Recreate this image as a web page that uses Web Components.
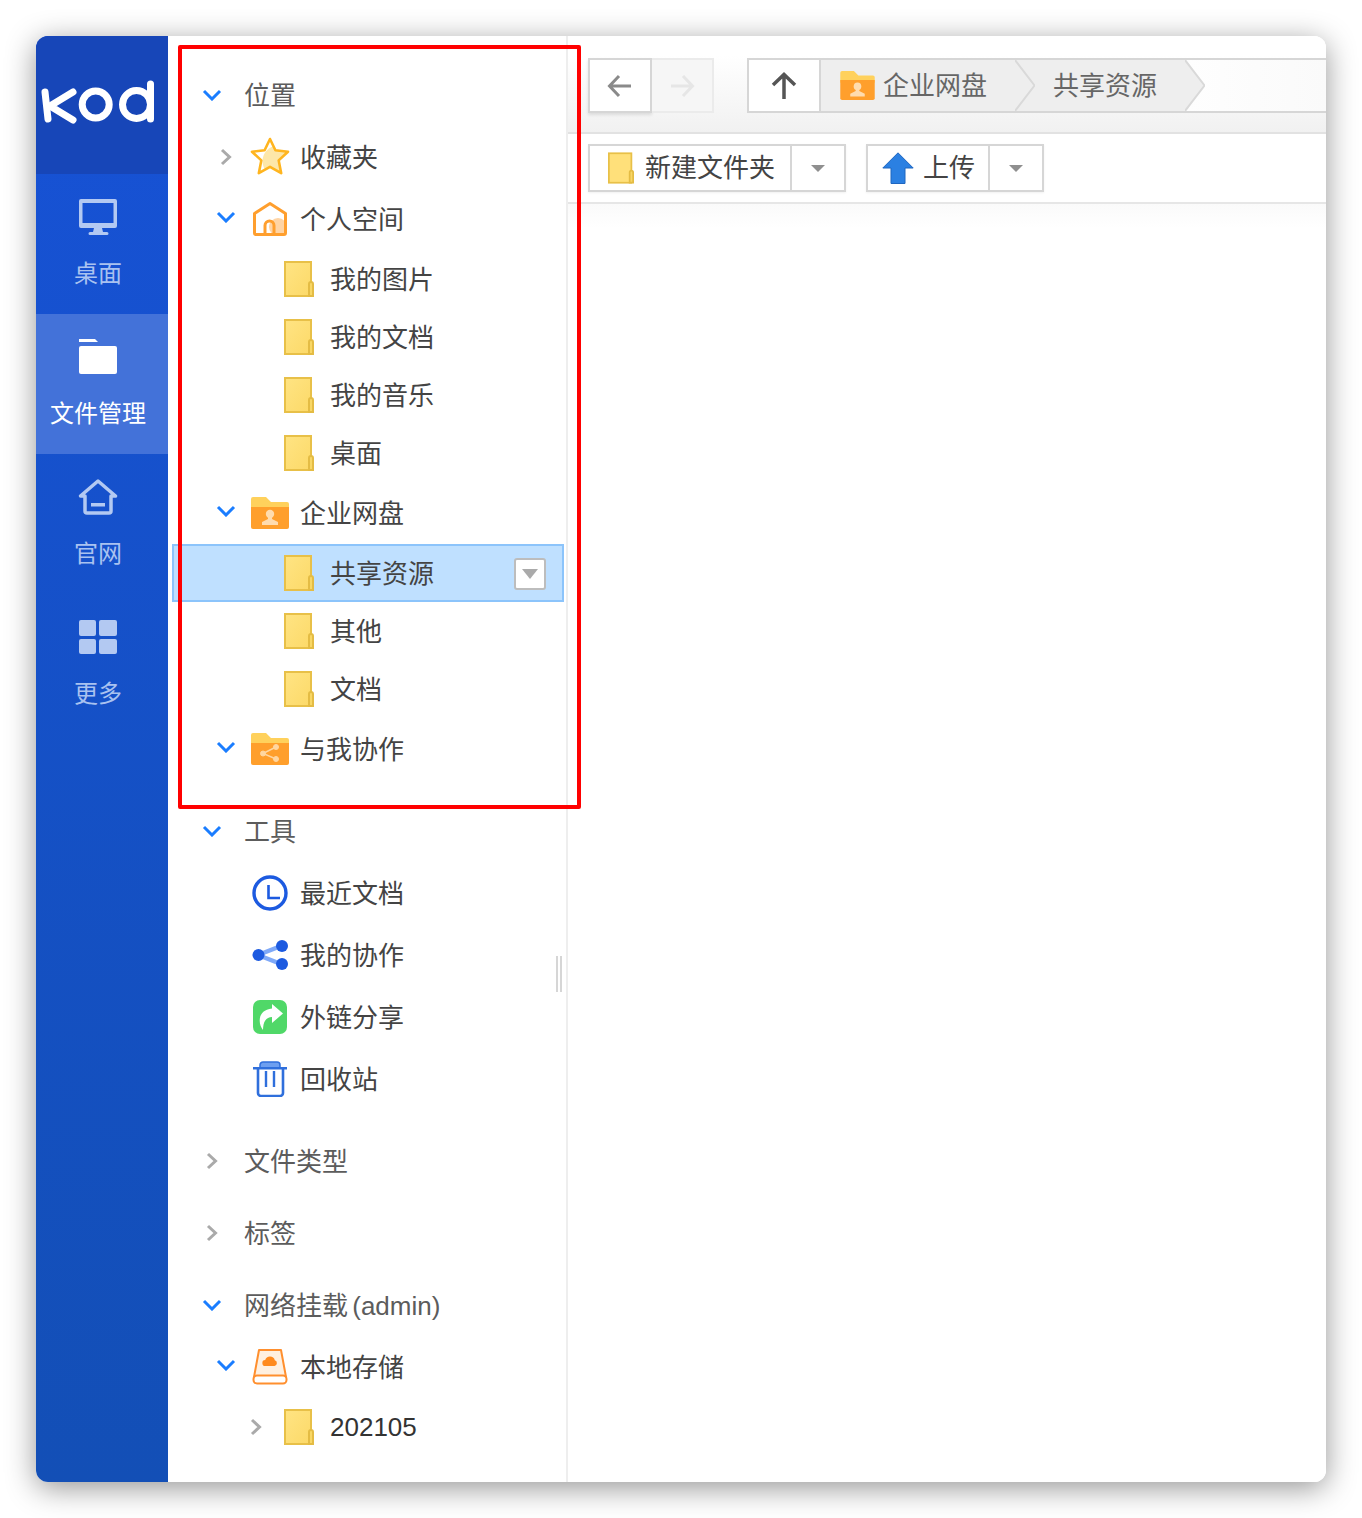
<!DOCTYPE html>
<html lang="zh">
<head>
<meta charset="utf-8">
<title>kod</title>
<style>
html, body { margin: 0; background: #fff; }
body {
	box-sizing: border-box;
	width: 1362px;
	height: 1518px;
	padding: 36px;
	font-family: "Liberation Sans", "Noto Sans CJK SC", sans-serif;
}
</style>
</head>
<body>
<app-window>
	<nav-rail slot="rail">
		<rail-item icon="monitor">桌面</rail-item>
		<rail-item icon="folder-white" active>文件管理</rail-item>
		<rail-item icon="home">官网</rail-item>
		<rail-item icon="grid">更多</rail-item>
	</nav-rail>

	<file-tree slot="tree">
		<tree-row level="0" arrow="down">位置</tree-row>
		<tree-row level="1" arrow="right" icon="star">收藏夹</tree-row>
		<tree-row level="1" arrow="down" icon="house">个人空间</tree-row>
		<tree-row level="2" icon="folder">我的图片</tree-row>
		<tree-row level="2" icon="folder">我的文档</tree-row>
		<tree-row level="2" icon="folder">我的音乐</tree-row>
		<tree-row level="2" icon="folder">桌面</tree-row>
		<tree-row level="1" arrow="down" icon="group">企业网盘</tree-row>
		<tree-row level="2" icon="folder" selected>共享资源</tree-row>
		<tree-row level="2" icon="folder">其他</tree-row>
		<tree-row level="2" icon="folder">文档</tree-row>
		<tree-row level="1" arrow="down" icon="shared" gap="20">与我协作</tree-row>

		<tree-row level="0" arrow="down">工具</tree-row>
		<tree-row level="1" icon="clock">最近文档</tree-row>
		<tree-row level="1" icon="share">我的协作</tree-row>
		<tree-row level="1" icon="link">外链分享</tree-row>
		<tree-row level="1" icon="trash" gap="20">回收站</tree-row>

		<tree-row level="0" arrow="right" gap="10">文件类型</tree-row>
		<tree-row level="0" arrow="right" gap="10">标签</tree-row>
		<tree-row level="0" arrow="down">网络挂载 (admin)</tree-row>
		<tree-row level="1" arrow="down" icon="disk">本地存储</tree-row>
		<tree-row level="2" arrow="right" icon="folder" num>202105</tree-row>
	</file-tree>

	<main-pane slot="main">
		<path-bar>
			<path-crumb icon="group-small">企业网盘</path-crumb>
			<path-crumb last>共享资源</path-crumb>
		</path-bar>
		<action-bar>
			<split-button icon="folder-small" main-width="202">新建文件夹</split-button>
			<split-button icon="upload" main-width="122">上传</split-button>
		</action-bar>
	</main-pane>

	<red-mark slot="mark"></red-mark>
</app-window>

<script>
const ICONS = {
	monitor: `<svg width="40" height="36" viewBox="0 0 40 36"><path fill="#b3c9f2" fill-rule="evenodd" d="M3 0h34a2 2 0 0 1 2 2v25a2 2 0 0 1-2 2H3a2 2 0 0 1-2-2V2a2 2 0 0 1 2-2zm1.500 4v20h31V4z"/><path fill="#b3c9f2" d="M16 29h8l1 4h4a1.500 1.500 0 0 1 0 3H12a1.500 1.500 0 0 1 0-3h3z"/></svg>`,
	'folder-white': `<svg width="40" height="36" viewBox="0 0 40 36"><path fill="#fff" d="M1 0h16l3 3H1z"/><path fill="#fff" d="M3 7h34a2 2 0 0 1 2 2v24a2 2 0 0 1-2 2H3a2 2 0 0 1-2-2V9a2 2 0 0 1 2-2z"/></svg>`,
	home: `<svg width="40" height="36" viewBox="0 0 40 36"><path fill="none" stroke="#b3c9f2" stroke-width="3.500" stroke-linejoin="round" d="M2.500 17 20 2l17.500 15H33v15a2 2 0 0 1-2 2H9a2 2 0 0 1-2-2V17z"/><rect x="13" y="24" width="14" height="3.500" fill="#b3c9f2"/></svg>`,
	grid: `<svg width="40" height="36" viewBox="0 0 40 36"><g fill="#b3c9f2"><rect x="1" y="1" width="17" height="16" rx="2"/><rect x="21" y="1" width="18" height="16" rx="2"/><rect x="1" y="20" width="17" height="15" rx="2"/><rect x="21" y="20" width="18" height="15" rx="2"/></g></svg>`,

	star: `<svg width="40" height="40" viewBox="0 0 40 40"><clipPath id="s"><path d="M20 2l5.400 11.200 12.600 1.500-9.300 8.700 2.500 12.800L20 29.900 8.800 36.200l2.500-12.800L2 14.700l12.600-1.500z"/></clipPath><path fill="#fff" d="M20 2l5.400 11.200 12.600 1.500-9.300 8.700 2.500 12.800L20 29.900 8.800 36.200l2.500-12.800L2 14.700l12.600-1.500z"/><ellipse cx="27" cy="24" rx="14.500" ry="15" fill="#fde7a9" clip-path="url(#s)"/><path fill="none" stroke="#ffb51f" stroke-width="2.600" stroke-linejoin="round" d="M20 2l5.400 11.200 12.600 1.500-9.300 8.700 2.500 12.800L20 29.900 8.800 36.200l2.500-12.800L2 14.700l12.600-1.500z"/></svg>`,
	house: `<svg width="36" height="36" viewBox="0 0 36 36"><circle cx="26" cy="26" r="9" fill="#ffd4a4"/><path fill="none" stroke="#ff9f2e" stroke-width="3" stroke-linejoin="round" d="M2.500 12.500 18 2.500l15.500 10V32a1.500 1.500 0 0 1-1.500 1.500H4A1.500 1.500 0 0 1 2.500 32z"/><path fill="none" stroke="#ff9f2e" stroke-width="3" d="M13 33.500v-9a4.500 4.500 0 0 1 9 0v9"/></svg>`,
	group: `<svg width="38" height="32" viewBox="0 0 38 32"><path fill="#ffd15c" d="M2 0h13l5 5h16a2 2 0 0 1 2 2v6H0V2a2 2 0 0 1 2-2z"/><path fill="#ff9f2c" d="M0 10h38v20a2 2 0 0 1-2 2H2a2 2 0 0 1-2-2z"/><g fill="#ffdcae"><circle cx="19" cy="17" r="4.200"/><path d="M17 20h4v2l6 3v3H11v-3l6-3z"/></g></svg>`,
	'group-small': `<svg width="35" height="29" viewBox="0 0 38 32"><path fill="#ffd15c" d="M2 0h13l5 5h16a2 2 0 0 1 2 2v6H0V2a2 2 0 0 1 2-2z"/><path fill="#ff9f2c" d="M0 10h38v20a2 2 0 0 1-2 2H2a2 2 0 0 1-2-2z"/><g fill="#ffdcae"><circle cx="19" cy="17" r="4.200"/><path d="M17 20h4v2l6 3v3H11v-3l6-3z"/></g></svg>`,
	shared: `<svg width="38" height="32" viewBox="0 0 38 32"><path fill="#ffd15c" d="M2 0h13l5 5h16a2 2 0 0 1 2 2v6H0V2a2 2 0 0 1 2-2z"/><path fill="#ff9f2c" d="M0 10h38v20a2 2 0 0 1-2 2H2a2 2 0 0 1-2-2z"/><g fill="#ffd6a0" stroke="#ffd6a0"><path fill="none" stroke-width="1.500" d="M25 14l-13 6.500L25 26"/><circle cx="12" cy="20.500" r="2.500"/><circle cx="25" cy="14" r="2.500"/><circle cx="25" cy="26" r="2.500"/></g></svg>`,
	folder: `<svg width="30" height="36" viewBox="0 0 30 36"><defs><linearGradient id="y" x1="0" y1="0" x2="1" y2="1"><stop offset="0" stop-color="#ffe483"/><stop offset="1" stop-color="#fcd968"/></linearGradient></defs><rect x="1" y="1" width="26" height="34" fill="url(#y)" stroke="#e8c048" stroke-width="2"/><path fill="#f8d766" stroke="#e4bc44" stroke-width="2" d="M25 35V23a2 2 0 0 1 4 0v12z"/></svg>`,
	'folder-small': `<svg width="26" height="32" viewBox="0 0 30 36"><rect x="1" y="1" width="26" height="34" fill="#ffe07a" stroke="#e8c048" stroke-width="2"/><path fill="#f8d766" stroke="#e4bc44" stroke-width="2" d="M25 35V23a2 2 0 0 1 4 0v12z"/></svg>`,
	clock: `<svg width="36" height="36" viewBox="0 0 36 36"><circle cx="18" cy="18" r="16" fill="#fff" stroke="#1c5ae0" stroke-width="3.400"/><path fill="none" stroke="#1c5ae0" stroke-width="2.600" d="M16.500 10v13H28"/></svg>`,
	share: `<svg width="36" height="36" viewBox="0 0 36 36"><path fill="none" stroke="#7fa9f8" stroke-width="4.500" d="M29 9 6 18l23 9"/><g fill="#1c5ae0"><circle cx="6.500" cy="18" r="6"/><circle cx="30" cy="9" r="6"/><circle cx="30" cy="27" r="6"/></g></svg>`,
	link: `<svg width="36" height="36" viewBox="0 0 36 36"><rect x="1" y="1" width="34" height="34" rx="7" fill="#50d868"/><path fill="#fff" d="M20 5l11 9.500L20 24v-6c-6 0-9 5-9 13-5-6-6-20 9-21.500z"/></svg>`,
	trash: `<svg width="36" height="36" viewBox="0 0 36 36"><path fill="#6d9ff0" stroke="#2f6fdc" stroke-width="1.500" d="M8 7V4a3 3 0 0 1 3-3h14a3 3 0 0 1 3 3v3z"/><path fill="none" stroke="#2f6fdc" stroke-width="2.400" d="M1 7.200h34"/><path fill="none" stroke="#2f6fdc" stroke-width="2.600" stroke-linejoin="round" d="M6 7.500V32a3 3 0 0 0 3 3h19a3 3 0 0 0 3-3V7.500"/><path fill="none" stroke="#2f6fdc" stroke-width="2.400" d="M14 10v16M22 10v16"/></svg>`,
	disk: `<svg width="36" height="36" viewBox="0 0 36 36"><path fill="#fff0e0" stroke="#ff8f2e" stroke-width="2" stroke-linejoin="round" d="M7 1h22l5 27H2z"/><rect x="1.500" y="26.500" width="33" height="8" rx="3.500" fill="#fff" stroke="#ff8f2e" stroke-width="2"/><path fill="#ff8a1e" d="M13.500 17a3 3 0 0 1-.3-6 5 5 0 0 1 9.600.2 3 3 0 0 1-.3 5.800z"/></svg>`,
	upload: `<svg width="32" height="32" viewBox="0 0 32 32"><path fill="#2b80e2" stroke="#1f66c0" stroke-width="1" stroke-linejoin="round" d="M16 .8 31.200 16H23v15.500H9V16H.8z"/></svg>`,
};

class KodIcon extends HTMLElement {
	static get observedAttributes() { return ['name']; }
	constructor() {
		super();
		this.attachShadow({ mode: 'open' });
	}
	attributeChangedCallback() {
		this.shadowRoot.innerHTML = `<style>:host{display:flex;flex:none}svg{display:block}</style>${ICONS[this.getAttribute('name')] || ''}`;
	}
}
customElements.define('kod-icon', KodIcon);

const windowTemplate = document.createElement('template');
windowTemplate.innerHTML = `
<style>
:host {
	display: block;
	position: relative;
	width: 1290px;
	height: 1446px;
}
.frame {
	display: flex;
	width: 100%;
	height: 100%;
	border-radius: 12px;
	overflow: hidden;
	background: #fff;
	box-shadow: 0 6px 30px rgba(0, 0, 0, .42);
}
</style>
<div class="frame">
	<slot name="rail"></slot>
	<slot name="tree"></slot>
	<slot name="main"></slot>
</div>
<slot name="mark"></slot>
`;
class AppWindow extends HTMLElement {
	constructor() {
		super();
		this.attachShadow({ mode: 'open' });
		this.shadowRoot.appendChild(windowTemplate.content.cloneNode(true));
	}
}
customElements.define('app-window', AppWindow);

const railTemplate = document.createElement('template');
railTemplate.innerHTML = `
<style>
:host {
	display: block;
	flex: none;
	width: 132px;
	height: 100%;
	background: linear-gradient(#1752d6, #134fb6);
}
.logo {
	height: 138px;
	background: #1746b8;
}
svg { display: block; }
</style>
<div class="logo">
	<svg width="132" height="138" viewBox="36 36 132 138" fill="none" stroke="#fff" stroke-width="7" stroke-linecap="round" stroke-linejoin="round">
		<path d="M45 92l3 27"/>
		<path d="M73 92 50 106l23 14"/>
		<circle cx="95.700" cy="104.500" r="13.500"/>
		<circle cx="136.500" cy="104.500" r="14"/>
		<path d="M150.500 84v35"/>
	</svg>
</div>
<slot></slot>
`;
class NavRail extends HTMLElement {
	constructor() {
		super();
		this.attachShadow({ mode: 'open' });
		this.shadowRoot.appendChild(railTemplate.content.cloneNode(true));
	}
}
customElements.define('nav-rail', NavRail);

const railItemTemplate = document.createElement('template');
railItemTemplate.innerHTML = `
<style>
:host {
	display: flex;
	flex-direction: column;
	align-items: center;
	box-sizing: border-box;
	height: 140px;
	padding: 25px 8px 0 0;
	font-size: 24px;
	line-height: 34px;
	color: #a9c2f0;
}
:host([active]) {
	background: #4372d9;
	color: #fff;
}
.label { margin-top: 22px; }
</style>
<kod-icon></kod-icon>
<div class="label"><slot></slot></div>
`;
class RailItem extends HTMLElement {
	constructor() {
		super();
		this.attachShadow({ mode: 'open' });
		this.shadowRoot.appendChild(railItemTemplate.content.cloneNode(true));
		this.shadowRoot.querySelector('kod-icon').setAttribute('name', this.getAttribute('icon'));
	}
}
customElements.define('rail-item', RailItem);

const treeTemplate = document.createElement('template');
treeTemplate.innerHTML = `
<style>
:host {
	display: block;
	position: relative;
	flex: none;
	box-sizing: border-box;
	width: 400px;
	height: 100%;
	padding-top: 28px;
	border-right: 2px solid #eeeeee;
	background: #fff;
}
/* drag handle sits over the list */
.grip {
	position: absolute;
	left: 388px;
	top: 920px;
	width: 2px;
	height: 36px;
	border-left: 2px solid #d6d6d6;
	border-right: 2px solid #d6d6d6;
}
</style>
<slot></slot>
<div class="grip"></div>
`;
class FileTree extends HTMLElement {
	constructor() {
		super();
		this.attachShadow({ mode: 'open' });
		this.shadowRoot.appendChild(treeTemplate.content.cloneNode(true));
	}
}
customElements.define('file-tree', FileTree);

const CHEVRONS = {
	down: `<svg width="20" height="12" viewBox="0 0 20 12"><path fill="none" stroke="#1a7dff" stroke-width="3" d="M2 2l8 8 8-8"/></svg>`,
	right: `<svg width="12" height="18" viewBox="0 0 12 18"><path fill="none" stroke="#aaaaaa" stroke-width="3" d="M2 2l7.500 7L2 16"/></svg>`,
};

const rowTemplate = document.createElement('template');
rowTemplate.innerHTML = `
<style>
:host {
	display: flex;
	align-items: center;
	box-sizing: border-box;
	height: 62px;
	font-size: 26px;
	line-height: 36px;
	color: #444;
	white-space: nowrap;
}
:host([level="0"]) { padding-left: 34px; color: #5c5c5c; word-spacing: -3px; }
:host([level="1"]) { padding-left: 48px; }
:host([level="2"]) { padding-left: 78px; height: 58px; }
:host([selected]) {
	margin-left: 4px;
	margin-right: 2px;
	padding-left: 72px;
	background: #bfe0ff;
	border: 2px solid #8cc4fb;
}
:host([num]) { color: #333; }
slot { display: block; padding-top: 2px; }
:host([num]) slot { padding-top: 0; }
.chev { display: flex; justify-content: center; align-items: center; flex: none; width: 20px; }
:host([level="1"][arrow="down"]) .chev { margin-bottom: 4px; }
.icon { display: flex; justify-content: center; align-items: center; flex: none; width: 36px; height: 36px; margin: 0 12px 0 16px; }
:host([level="0"]) .icon { width: 0; margin: 0 0 0 22px; }
:host([level="2"]) .icon { width: 30px; margin: 0 16px 0 18px; }
.more {
	display: none;
	box-sizing: border-box;
	width: 32px;
	height: 32px;
	margin: 2px 16px 0 auto;
	background: #fff;
	border: 2px solid #bdbdbd;
	border-radius: 3px;
}
:host([selected]) .more { display: flex; align-items: center; justify-content: center; }
.more i {
	border-left: 8px solid transparent;
	border-right: 8px solid transparent;
	border-top: 10px solid #aaaaaa;
}
</style>
<span class="chev"></span>
<span class="icon"></span>
<slot></slot>
<span class="more"><i></i></span>
`;
class TreeRow extends HTMLElement {
	constructor() {
		super();
		this.attachShadow({ mode: 'open' });
		this.shadowRoot.appendChild(rowTemplate.content.cloneNode(true));
		const arrow = this.getAttribute('arrow');
		if (arrow) this.shadowRoot.querySelector('.chev').innerHTML = CHEVRONS[arrow];
		const icon = this.getAttribute('icon');
		if (icon) this.shadowRoot.querySelector('.icon').innerHTML = `<kod-icon name="${icon}"></kod-icon>`;
		// space left under the last row of a group
		if (this.hasAttribute('gap')) this.style.marginBottom = this.getAttribute('gap') + 'px';
	}
}
customElements.define('tree-row', TreeRow);

const paneTemplate = document.createElement('template');
paneTemplate.innerHTML = `
<style>
:host {
	display: flex;
	flex-direction: column;
	flex: 1;
	min-width: 0;
	background: #fff;
}
.fill {
	flex: 1;
	background: linear-gradient(#fafafa, #fff 24px);
}
</style>
<slot></slot>
<div class="fill"></div>
`;
class MainPane extends HTMLElement {
	constructor() {
		super();
		this.attachShadow({ mode: 'open' });
		this.shadowRoot.appendChild(paneTemplate.content.cloneNode(true));
	}
}
customElements.define('main-pane', MainPane);

const pathBarTemplate = document.createElement('template');
pathBarTemplate.innerHTML = `
<style>
:host {
	display: flex;
	box-sizing: border-box;
	height: 98px;
	padding: 22px 0 0 20px;
	border-bottom: 2px solid #e2e2e2;
	background: linear-gradient(#fff 20%, #f1f1f1);
}
.nav, .path { display: flex; height: 55px; }
.btn {
	display: flex;
	align-items: center;
	justify-content: center;
	box-sizing: border-box;
	height: 55px;
	background: #fff;
	border: 2px solid #d6d6d6;
}
.back { width: 64px; box-shadow: 0 2px 3px rgba(0, 0, 0, .1); }
.forward { width: 62px; background: #f6f6f6; border-color: #ebebeb; border-left: 0; }
.path {
	flex: 1;
	margin-left: 33px;
	min-width: 0;
	background: linear-gradient(90deg, #f6f6f6, #fff 70%, #fafafa);
}
.up { width: 74px; flex: none; }
.crumbs {
	display: flex;
	flex: 1;
	box-sizing: border-box;
	height: 55px;
	border-top: 2px solid #d6d6d6;
	border-bottom: 2px solid #d6d6d6;
}
svg { display: block; }
</style>
<div class="nav">
	<div class="btn back"><svg width="26" height="24" viewBox="0 0 26 24"><path fill="none" stroke="#8a8a8a" stroke-width="3" d="M24 12H3M12 2 2.500 12 12 22"/></svg></div>
	<div class="btn forward"><svg width="26" height="24" viewBox="0 0 26 24"><path fill="none" stroke="#e6e6e6" stroke-width="3" d="M2 12h21M14 2l9.500 10L14 22"/></svg></div>
</div>
<div class="path">
	<div class="btn up"><svg width="28" height="28" viewBox="0 0 28 28"><path fill="none" stroke="#555" stroke-width="3.500" d="M14 27V3M3 13 14 2.500 25 13"/></svg></div>
	<div class="crumbs"><slot></slot></div>
</div>
`;
class PathBar extends HTMLElement {
	constructor() {
		super();
		this.attachShadow({ mode: 'open' });
		this.shadowRoot.appendChild(pathBarTemplate.content.cloneNode(true));
	}
}
customElements.define('path-bar', PathBar);

const crumbTemplate = document.createElement('template');
crumbTemplate.innerHTML = `
<style>
:host {
	display: flex;
	flex: none;
	height: 51px;
	font-size: 26px;
	line-height: 36px;
	color: #666;
}
.body {
	display: flex;
	align-items: center;
	gap: 8px;
	padding: 0 28px 0 19px;
	background: #eeeeee;
	white-space: nowrap;
}
:host([last]) .body { padding: 0 28px 0 18px; }
svg { display: block; flex: none; }
</style>
<div class="body"><span class="ico"></span><slot></slot></div>
<svg width="20" height="51" viewBox="0 0 20 51">
	<path class="tip" fill="#eeeeee" d="M0 0 20 25.500 0 51z"/>
	<path fill="none" stroke="#d9d9d9" stroke-width="2" d="M0 0 19.500 25.500 0 51"/>
</svg>
`;
class PathCrumb extends HTMLElement {
	constructor() {
		super();
		this.attachShadow({ mode: 'open' });
		this.shadowRoot.appendChild(crumbTemplate.content.cloneNode(true));
		const ico = this.shadowRoot.querySelector('.ico');
		const icon = this.getAttribute('icon');
		if (icon) ico.innerHTML = `<kod-icon name="${icon}"></kod-icon>`;
		else ico.remove();
		// only the last crumb shows the bar behind its tip
		if (!this.hasAttribute('last')) this.shadowRoot.querySelector('svg').style.background = '#eeeeee';
	}
}
customElements.define('path-crumb', PathCrumb);

const actionBarTemplate = document.createElement('template');
actionBarTemplate.innerHTML = `
<style>
:host {
	display: flex;
	gap: 20px;
	box-sizing: border-box;
	height: 70px;
	padding: 10px 0 0 20px;
	border-bottom: 2px solid #e6e6e6;
	background: #fff;
}
</style>
<slot></slot>
`;
class ActionBar extends HTMLElement {
	constructor() {
		super();
		this.attachShadow({ mode: 'open' });
		this.shadowRoot.appendChild(actionBarTemplate.content.cloneNode(true));
	}
}
customElements.define('action-bar', ActionBar);

const splitTemplate = document.createElement('template');
splitTemplate.innerHTML = `
<style>
:host {
	display: flex;
	box-sizing: border-box;
	height: 48px;
	background: #fff;
	border: 2px solid #d6d6d6;
	box-shadow: 0 1px 2px rgba(0, 0, 0, .06);
	font-size: 26px;
	line-height: 36px;
	color: #444;
}
.main {
	display: flex;
	align-items: center;
	gap: 11px;
	box-sizing: border-box;
	padding-left: 18px;
	border-right: 2px solid #d6d6d6;
	white-space: nowrap;
}
.drop {
	display: flex;
	align-items: center;
	justify-content: center;
	width: 52px;
}
.drop i {
	border-left: 7px solid transparent;
	border-right: 7px solid transparent;
	border-top: 7px solid #8f8f8f;
}
</style>
<div class="main"><kod-icon></kod-icon><slot></slot></div>
<div class="drop"><i></i></div>
`;
class SplitButton extends HTMLElement {
	constructor() {
		super();
		this.attachShadow({ mode: 'open' });
		this.shadowRoot.appendChild(splitTemplate.content.cloneNode(true));
		const main = this.shadowRoot.querySelector('.main');
		this.shadowRoot.querySelector('kod-icon').setAttribute('name', this.getAttribute('icon'));
		main.style.width = this.getAttribute('main-width') + 'px';
		if (this.getAttribute('icon') === 'upload') {
			main.style.paddingLeft = '14px';
			main.style.gap = '9px';
		}
	}
}
customElements.define('split-button', SplitButton);

const markTemplate = document.createElement('template');
markTemplate.innerHTML = `
<style>
/* annotation drawn on top of the screenshot */
:host {
	position: absolute;
	left: 142px;
	top: 9px;
	box-sizing: border-box;
	width: 403px;
	height: 764px;
	border: 4px solid #ff0000;
	border-radius: 2px;
	pointer-events: none;
}
</style>
`;
class RedMark extends HTMLElement {
	constructor() {
		super();
		this.attachShadow({ mode: 'open' });
		this.shadowRoot.appendChild(markTemplate.content.cloneNode(true));
	}
}
customElements.define('red-mark', RedMark);
</script>
</body>
</html>
